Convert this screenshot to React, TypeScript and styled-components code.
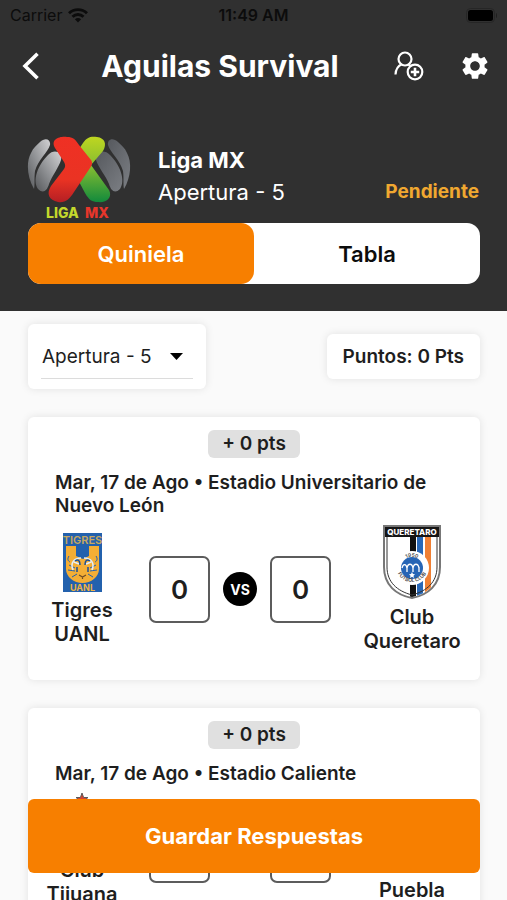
import React, { useState } from "react";
import type { ReactElement } from "react";
import styled, { createGlobalStyle } from "styled-components";

const color = {
  dark: "#303030",
  orange: "#f77f00",
  amber: "#f0a830",
  page: "#fafafa",
  ink: "#1e1e1e",
  badge: "#e0e0e0",
};

const GlobalStyle = createGlobalStyle`
  *, *::before, *::after { box-sizing: border-box; }
  body {
    margin: 0;
    background: ${color.page};
    color: ${color.ink};
    font-family: Inter, "Liberation Sans", sans-serif;
  }
  button, input, select { font: inherit; color: inherit; }
  h1, h2, p { margin: 0; }
`;

const Screen = styled.div`
  height: 100vh;
  overflow: hidden;
  display: flex;
  flex-direction: column;
`;

const Header = styled.header`
  flex: none;
  background: ${color.dark};
  color: #fff;
  padding-bottom: 27px;
`;

const StatusBar = styled.div`
  display: grid;
  grid-template-columns: 1fr auto 1fr;
  align-items: center;
  height: 30px;
  padding: 0 10px;
  color: #0c0c0c;
  font-size: 16px;
`;

const Carrier = styled.span`
  display: flex;
  align-items: center;
  gap: 6px;
`;

const Clock = styled.time`
  font-weight: 600;
`;

const Battery = styled.svg`
  justify-self: end;
`;

const AppBar = styled.div`
  display: flex;
  align-items: center;
  height: 72px;
  padding: 0 18px 0 16px;
`;

const IconButton = styled.button`
  display: grid;
  place-items: center;
  width: 30px;
  height: 40px;
  padding: 0;
  border: 0;
  background: none;
  color: #fff;
  cursor: pointer;
`;

const Title = styled.h1`
  flex: 1;
  text-align: center;
  font-size: 30px;
  line-height: 36px;
  font-weight: 700;
`;

const Actions = styled.div`
  display: flex;
  gap: 35px;
`;

const League = styled.section`
  display: flex;
  align-items: flex-end;
  gap: 26px;
  height: 121px;
  padding: 0 28px 3px 27px;
`;

const LeagueInfo = styled.div`
  flex: 1;
  padding-bottom: 12px;
`;

const LeagueName = styled.h2`
  font-size: 22px;
  line-height: 32px;
  font-weight: 700;
`;

const LeagueRow = styled.div`
  display: flex;
  justify-content: space-between;
  align-items: center;
  font-size: 22px;
  line-height: 32px;
`;

const Status = styled.span`
  color: ${color.amber};
  font-size: 19px;
  font-weight: 700;
`;

const Tabs = styled.div`
  display: flex;
  margin: 0 27px 0 28px;
  border-radius: 13px;
  background: #fff;
`;

const Tab = styled.button<{ $active: boolean }>`
  flex: 1;
  height: 61px;
  padding: 0;
  border: 0;
  border-radius: 13px;
  background: ${(p) => (p.$active ? color.orange : "transparent")};
  color: ${(p) => (p.$active ? "#fff" : "#0c0c0c")};
  font-size: 22px;
  font-weight: 600;
  cursor: pointer;
`;

const Content = styled.main`
  flex: 1;
  min-height: 0;
  overflow-y: auto;
  scrollbar-width: none;
  display: flex;
  flex-direction: column;
  gap: 28px;
  padding: 13px 27px 110px 28px;
`;

const Panel = styled.div`
  background: #fff;
  border-radius: 6px;
  box-shadow: 0 0 8px rgba(0, 0, 0, 0.1);
`;

const Filters = styled.div`
  display: flex;
  flex: none;
  justify-content: space-between;
  align-items: center;
`;

const SelectPanel = styled(Panel)`
  width: 178px;
  height: 65px;
  padding: 11px 13px 10px;
`;

const SelectField = styled.label`
  display: grid;
  align-items: center;
  height: 44px;
  border-bottom: 1px solid #dcdcdc;
  > * { grid-area: 1 / 1; }
  > svg { justify-self: end; margin-right: 10px; pointer-events: none; }
`;

const Select = styled.select`
  appearance: none;
  width: 100%;
  height: 42px;
  padding: 0 1px;
  border: 0;
  background: transparent;
  font-size: 19px;
`;

const PointsPanel = styled(Panel)`
  height: 45px;
  padding: 0 16px;
  font-size: 19px;
  line-height: 45px;
  font-weight: 600;
`;

const Card = styled(Panel).attrs({ as: "article" })`
  flex: none;
  display: flex;
  flex-direction: column;
  padding: 13px 17px 27px;
`;

const Badge = styled.span`
  align-self: center;
  padding: 0 14px;
  border-radius: 6px;
  background: ${color.badge};
  font-size: 19px;
  line-height: 28px;
  font-weight: 600;
`;

const Venue = styled.p`
  margin: 13px 10px 8px;
  font-size: 19px;
  line-height: 23px;
  font-weight: 600;
`;

const Match = styled.div`
  display: grid;
  grid-template-columns: 74px 1fr 102px;
  align-items: center;
`;

const Team = styled.div`
  display: flex;
  flex-direction: column;
  align-items: center;
  gap: 6px;
  text-align: center;
  font-size: 20px;
  line-height: 24px;
  font-weight: 600;
`;

const Scores = styled.div`
  display: flex;
  justify-content: center;
  align-items: center;
  gap: 13px;
`;

const Score = styled.input`
  width: 61px;
  height: 67px;
  padding: 0;
  border: 2px solid #5c5c5c;
  border-radius: 7px;
  background: #fff;
  text-align: center;
  font-size: 26px;
  font-weight: 600;
`;

const Versus = styled.span`
  display: grid;
  place-items: center;
  width: 34px;
  height: 34px;
  border-radius: 50%;
  background: #000;
  color: #fff;
  font-size: 14px;
  font-weight: 700;
`;

const SaveButton = styled.button`
  position: fixed;
  right: 27px;
  bottom: 27px;
  left: 28px;
  height: 74px;
  border: 0;
  border-radius: 6px;
  background: ${color.orange};
  color: #fff;
  font-size: 22px;
  font-weight: 700;
  cursor: pointer;
`;

const WifiIcon = () => (
  <svg width="20" height="15" viewBox="0 0 20 15" fill="none" stroke="currentColor" strokeWidth="2.9" aria-hidden="true">
    <path d="M1 5.2C6 .4 14 .4 19 5.2" />
    <path d="M4.5 8.8c3.2-3 7.800-3 11 0" />
    <path d="M10 14.500 6.900 11.300c1.800-1.600 4.400-1.600 6.200 0Z" fill="currentColor" stroke="none" />
  </svg>
);

const BatteryIcon = () => (
  <Battery width="32" height="15" viewBox="0 0 32 15" aria-hidden="true">
    <rect x="1.500" y=".5" width="28" height="14" rx="4" fill="none" stroke="#262626" />
    <rect x="3" y="2" width="25" height="11" rx="2.500" fill="#000" />
    <path d="M31 5c1.200.6 1.200 4.400 0 5Z" fill="#1c1c1c" />
  </Battery>
);

const BackIcon = () => (
  <svg width="18" height="28" viewBox="0 0 18 28" fill="none" stroke="currentColor" strokeWidth="3.600" aria-hidden="true">
    <path d="M15.500 1.800 3 14 15.500 26.200" />
  </svg>
);

const AddPersonIcon = () => (
  <svg width="30" height="30" viewBox="0 0 30 30" fill="none" stroke="currentColor" strokeWidth="2.200" aria-hidden="true">
    <circle cx="11" cy="8" r="6.500" />
    <path d="M1.500 23.500c.3-5 2.600-8.600 6.200-10.200M14.500 13.500l2 1.500" />
    <circle cx="21" cy="21" r="7.300" />
    <path d="M21 16.800v8.400M16.800 21h8.400" strokeWidth="2.600" />
  </svg>
);

const GearIcon = () => (
  <svg width="32" height="32" viewBox="0 0 24 24" fill="currentColor" aria-hidden="true">
    <path d="M19.140 12.940c.04-.3.06-.61.06-.94 0-.32-.02-.64-.07-.94l2.030-1.580c.18-.14.23-.41.12-.61l-1.920-3.320c-.12-.22-.37-.29-.59-.22l-2.390.96c-.5-.38-1.030-.7-1.620-.94l-.36-2.540c-.04-.24-.24-.41-.48-.41h-3.840c-.24 0-.43.17-.47.41l-.36 2.540c-.59.24-1.130.57-1.620.94l-2.390-.96c-.22-.08-.47 0-.59.22L2.740 8.870c-.12.21-.08.47.12.61l2.030 1.580c-.05.3-.09.63-.09.94s.02.64.07.94l-2.030 1.580c-.18.14-.23.41-.12.61l1.920 3.320c.12.22.37.29.59.22l2.390-.96c.5.38 1.030.7 1.620.94l.36 2.540c.05.24.24.41.48.41h3.840c.24 0 .44-.17.47-.41l.36-2.540c.59-.24 1.130-.56 1.620-.94l2.390.96c.22.08.47 0 .59-.22l1.920-3.320c.12-.22.07-.47-.12-.61l-2.010-1.580zM12 15.600c-1.980 0-3.600-1.620-3.600-3.600s1.620-3.600 3.600-3.600 3.600 1.620 3.600 3.600-1.620 3.600-3.600 3.600z" />
  </svg>
);

const LeagueLogo = () => (
  <svg width="105" height="84" viewBox="0 0 105 84" role="img" aria-label="Liga MX">
    <defs>
      <linearGradient id="silver" x1="1" y1="0" x2="0" y2="1">
        <stop offset="0" stopColor="#d2d2d4" />
        <stop offset=".55" stopColor="#8d8f92" />
        <stop offset="1" stopColor="#56585b" />
      </linearGradient>
      <linearGradient id="steel" x1="0" y1="0" x2="1" y2="1">
        <stop offset="0" stopColor="#56595e" />
        <stop offset="1" stopColor="#7b7e83" />
      </linearGradient>
      <linearGradient id="green" x1="0" y1="0" x2="0" y2="1">
        <stop offset="0" stopColor="#bfd620" />
        <stop offset=".45" stopColor="#86bd31" />
        <stop offset="1" stopColor="#128a3c" />
      </linearGradient>
      <linearGradient id="red" x1="0" y1="0" x2="0" y2="1">
        <stop offset="0" stopColor="#ef3024" />
        <stop offset=".65" stopColor="#ea3323" />
        <stop offset="1" stopColor="#b51f24" />
      </linearGradient>
    </defs>
    <path d="M13 6c5-5 11-3 10 3-2 7-12 15-15 26-1 8 0 13-1 18C0 41-1 26 4 17c2-5 6-8 9-11Z" fill="url(#silver)" />
    <path d="M21 19c6-7 15-3 13 5-2 7-9 16-12 24-2 7-6 10-11 5-6-9 0-24 10-34Z" fill="url(#silver)" />
    <path d="M91 6c-5-5-11-3-10 3 2 7 12 15 15 26 1 8 0 13 1 18 7-12 8-27 3-36-2-5-6-8-9-11Z" fill="url(#steel)" />
    <path d="M83 19c-6-7-17-3-14 5 2 7 10 16 13 24 2 7 6 10 11 5 6-9 0-24-10-34Z" fill="url(#steel)" />
    <path d="M56 7c4-6 8-7 14-6 8 1 10 7 6 14L64 29l18 25c4 8-3 13-11 12-6 0-9-2-13-9L49 40 46 22Z" fill="url(#green)" />
    <path d="M28 12C23 3 33 0 40 1c6 0 8 2 12 8l12 15c2 3 1 5-1 8L47 56c-5 8-9 11-16 10-9-2-12-8-7-16l13-17c2-3 1-5 0-7Z" fill="url(#red)" />
    <text x="19" y="82" fontSize="14" fontWeight="800" fontFamily="Inter" fill="#c3d82c">LIGA</text>
    <text x="58" y="82" fontSize="14" fontWeight="800" fontFamily="Inter" fill="#e8362b">MX</text>
  </svg>
);

const TigresCrest = () => (
  <svg width="39" height="59" viewBox="0 0 39 59" role="img" aria-label="Tigres">
    <rect width="39" height="59" fill="#2361ad" />
    <text x="19.500" y="11" fontSize="11" fontWeight="600" fontFamily="Inter" textAnchor="middle" fill="#c8a860">TIGRES</text>
    <path d="M3 13h10v8l6 3 6-3v-8h11v23c0 8-8 14-16.500 14S3 44 3 36Z" fill="#f4ae35" />
    <path d="M13 12h13v11l-6 3-7-3Z" fill="#2361ad" />
    <path d="M6 23c-2 3-1 5 1 6M33 23c2 3 1 5-1 6M6 32l6 3M5 37l7 1M33 32l-6 3M34 37l-7 1M9 44l5-3M30 44l-5-3" fill="none" stroke="#2361ad" strokeWidth="1" />
    <path d="M18 25c-7 0-11 5-8 12M21 25c7 0 11 5 8 12M11 29l5 2M28 29l-5 2" fill="none" stroke="#e4eef8" strokeWidth="1.600" />
    <path d="M12 28c3-2 5-1 5 4M27 28c-3-2-5-1-5 4M14 34v5M25 34v5" fill="none" stroke="#184f98" strokeWidth="1.500" />
    <path d="m16 42 3.500 2 3.500-2M19.500 44v2" fill="none" stroke="#704c25" strokeWidth="1.200" />
    <text x="19.500" y="57.500" fontSize="9" fontWeight="700" fontFamily="Inter" textAnchor="middle" fill="#efb343">UANL</text>
  </svg>
);

const QueretaroCrest = () => (
  <svg width="58" height="74" viewBox="0 0 58 74" role="img" aria-label="Queretaro">
    <defs>
      <clipPath id="shield">
        <path d="M2 2h54v40c0 17-12 27-27 30C14 69 2 59 2 42Z" />
      </clipPath>
    </defs>
    <path d="M1 1h56v41c0 18-12 28-28 31C13 70 1 60 1 42Z" fill="#fff" stroke="#777" strokeWidth="2" />
    <g clipPath="url(#shield)">
      <path d="M27 12h6v62h-6Z" fill="#111" />
      <path d="M34 12h6v62h-6Z" fill="#2868b8" />
      <path d="M42 12h6v62h-6Z" fill="#f08034" />
    </g>
    <rect x="2" y="2" width="54" height="10" fill="#151515" />
    <text x="29" y="10" fontSize="8" fontWeight="800" fontFamily="Inter" textAnchor="middle" fill="#fff">QUERETARO</text>
    <path d="M4 12v30c0 15 10 24 25 28 15-4 25-13 25-28V12" fill="none" stroke="#333" />
    <circle cx="29" cy="43" r="17" fill="#fff" />
    <circle cx="29" cy="43" r="11" fill="#2665b5" />
    <path d="M19 43c1-4 4-5 5 0 1-5 5-5 6 0 1-5 5-5 6 0M24 42v5M30 42v5M36 42v5" fill="none" stroke="#fff" strokeWidth="1.300" />
    <path d="m29 47 1 2 2 .3-1.500 1.400.4 2.300-1.900-1.200-1.900 1.200.4-2.300-1.500-1.400 2-.3Z" fill="#fff" />
    <path id="crest-top" d="M18 39a12 12 0 0 1 22 0" fill="none" />
    <path id="crest-bottom" d="M13.500 45a16 16 0 0 0 31 0" fill="none" />
    <text fontSize="5" fontWeight="600" fontFamily="Inter" fill="#444">
      <textPath href="#crest-top" startOffset="50%" textAnchor="middle">1950</textPath>
    </text>
    <text fontSize="5" fontWeight="600" fontFamily="Inter" fill="#444">
      <textPath href="#crest-bottom" startOffset="50%" textAnchor="middle">FUTBOL CLUB</textPath>
    </text>
  </svg>
);

const TijuanaCrest = () => (
  <svg width="50" height="59" viewBox="0 0 50 59" role="img" aria-label="Tijuana">
    <path d="m25 0 1.600 4.500H31L27.500 7.400l1.200 4.600-3.700-2.700-3.700 2.700 1.200-4.600L19 4.500h4.400Z" fill="#d8432f" stroke="#5b5b5b" />
    <circle cx="25" cy="35" r="23" fill="#c8102e" stroke="#222" strokeWidth="2" />
  </svg>
);

const PueblaCrest = () => (
  <svg width="58" height="74" viewBox="0 0 58 74" role="img" aria-label="Puebla">
    <path d="M3 8h52v34c0 14-12 22-26 26C15 64 3 56 3 42Z" fill="#fff" stroke="#1e4e9c" strokeWidth="3" />
    <path d="m12 10 34 44" stroke="#1e4e9c" strokeWidth="8" />
  </svg>
);

interface Side {
  name: string;
  Crest: () => ReactElement;
}

interface Fixture {
  venue: string;
  home: Side;
  away: Side;
}

const fixtures: Fixture[] = [
  {
    venue: "Estadio Universitario de Nuevo León",
    home: { name: "Tigres UANL", Crest: TigresCrest },
    away: { name: "Club Queretaro", Crest: QueretaroCrest },
  },
  {
    venue: "Estadio Caliente",
    home: { name: "Club Tijuana", Crest: TijuanaCrest },
    away: { name: "Puebla", Crest: PueblaCrest },
  },
];

const TeamView = ({ name, Crest }: Side) => (
  <Team>
    <Crest />
    <span>{name}</span>
  </Team>
);

const FixtureCard = ({ venue, home, away }: Fixture) => (
  <Card>
    <Badge>+ 0 pts</Badge>
    <Venue>{`Mar, 17 de Ago • ${venue}`}</Venue>
    <Match>
      <TeamView {...home} />
      <Scores>
        <Score defaultValue="0" inputMode="numeric" aria-label={`Goles ${home.name}`} />
        <Versus>VS</Versus>
        <Score defaultValue="0" inputMode="numeric" aria-label={`Goles ${away.name}`} />
      </Scores>
      <TeamView {...away} />
    </Match>
  </Card>
);

export default function App() {
  const [tab, setTab] = useState("Quiniela");
  return (
    <Screen>
      <GlobalStyle />
      <Header>
        <StatusBar>
          <Carrier>
            Carrier <WifiIcon />
          </Carrier>
          <Clock>11:49 AM</Clock>
          <BatteryIcon />
        </StatusBar>
        <AppBar>
          <IconButton aria-label="Volver">
            <BackIcon />
          </IconButton>
          <Title>Aguilas Survival</Title>
          <Actions>
            <IconButton aria-label="Invitar">
              <AddPersonIcon />
            </IconButton>
            <IconButton aria-label="Ajustes">
              <GearIcon />
            </IconButton>
          </Actions>
        </AppBar>
        <League>
          <LeagueLogo />
          <LeagueInfo>
            <LeagueName>Liga MX</LeagueName>
            <LeagueRow>
              <span>Apertura - 5</span>
              <Status>Pendiente</Status>
            </LeagueRow>
          </LeagueInfo>
        </League>
        <Tabs role="tablist">
          {["Quiniela", "Tabla"].map((name) => (
            <Tab key={name} role="tab" aria-selected={tab === name} $active={tab === name} onClick={() => setTab(name)}>
              {name}
            </Tab>
          ))}
        </Tabs>
      </Header>
      <Content>
        <Filters>
          <SelectPanel>
            <SelectField>
              <Select aria-label="Jornada" defaultValue="5">
                <option value="5">Apertura - 5</option>
              </Select>
              <svg width="13" height="7" viewBox="0 0 13 7" aria-hidden="true">
                <path d="M0 0h13L6.500 7Z" fill="#000" />
              </svg>
            </SelectField>
          </SelectPanel>
          <PointsPanel>Puntos: 0 Pts</PointsPanel>
        </Filters>
        {fixtures.map((fixture) => (
          <FixtureCard key={fixture.venue} {...fixture} />
        ))}
      </Content>
      <SaveButton>Guardar Respuestas</SaveButton>
    </Screen>
  );
}
